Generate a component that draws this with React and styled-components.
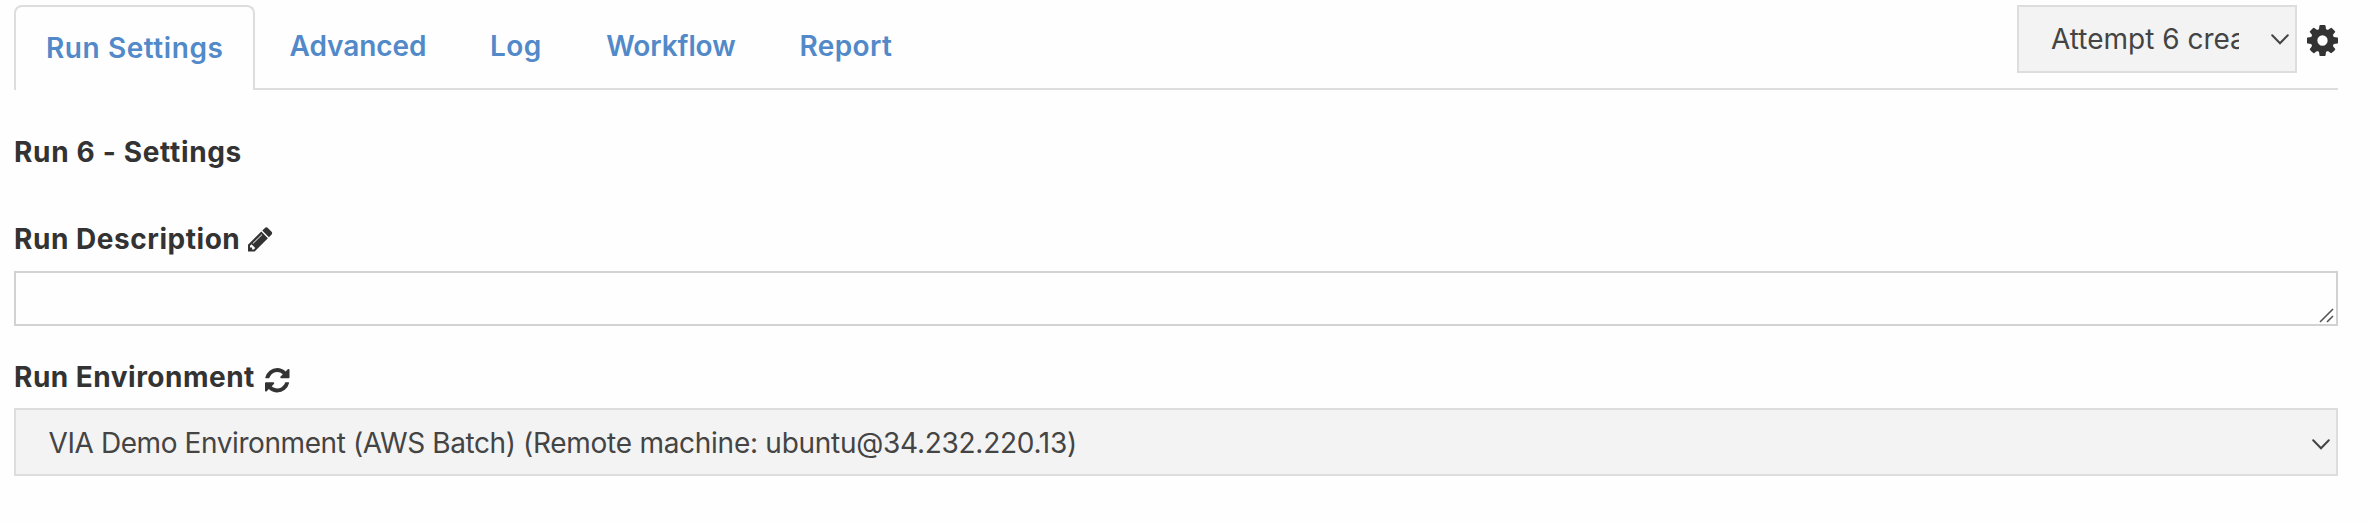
import React from "react";
import styled, { createGlobalStyle } from "styled-components";

const GlobalStyle = createGlobalStyle`
  * { box-sizing: border-box; }
  body {
    margin: 0;
    background: #fefefe;
    color: #333;
    font-family: Inter, "Liberation Sans", sans-serif;
    font-size: 28px;
    line-height: 40px;
  }
`;

const Page = styled.main`
  height: 522px;
  padding: 5px 32px 0 14px;
  overflow: hidden;
`;

const Header = styled.header`
  display: flex;
  justify-content: space-between;
  align-items: flex-start;
  height: 85px;
  box-shadow: inset 0 -2px #ddd;
`;

const Tabs = styled.nav`
  display: flex;
  height: 85px;
`;

const Tab = styled.a`
  width: ${(p) => p.$width}px;
  height: 85px;
  margin-right: 4px;
  padding: ${(p) => (p.$active ? "21px 0 0 30px" : "19px 0 0 28.5px")};
  border: 2px solid ${(p) => (p.$active ? "#ddd" : "transparent")};
  border-bottom: 0;
  border-radius: 8px 8px 0 0;
  background: ${(p) => (p.$active ? "#fefefe" : "transparent")};
  color: #5289c9;
  font-weight: 600;
  letter-spacing: ${(p) => p.$tracking || 0}px;
  white-space: nowrap;
`;

const Actions = styled.div`
  display: flex;
  gap: 10px;
`;

const SelectBox = styled.div`
  display: flex;
  justify-content: space-between;
  align-items: flex-start;
  width: ${(p) => p.$width || "100%"};
  height: 68px;
  margin-top: ${(p) => p.$top || 0}px;
  padding: ${(p) => p.$padding};
  border: 2px solid #ddd;
  background: #f3f3f3;
  color: #444;
`;

const SelectText = styled.span`
  width: ${(p) => p.$width || "auto"};
  overflow: hidden;
  white-space: nowrap;
`;

const Tracked = styled.span`
  letter-spacing: ${(p) => p.$tracking}px;
`;

const Chevron = styled.svg`
  width: 18px;
  height: 11px;
  margin-top: ${(p) => p.$top}px;
  fill: none;
  stroke: #444;
  stroke-width: 2;
  stroke-linecap: round;
`;

const Icon = styled.svg`
  flex: none;
  width: ${(p) => p.$size || 24.5}px;
  height: ${(p) => p.$size || 24.5}px;
  margin-top: ${(p) => p.$top}px;
  fill: #333;
`;

const Title = styled.h1`
  margin: 42px 0 0;
  font-size: 28px;
  line-height: 40px;
  font-weight: 700;
  letter-spacing: 0.66px;
`;

const Label = styled.div`
  display: flex;
  height: 40px;
  margin-top: ${(p) => p.$top}px;
  font-weight: 700;
`;

const LabelText = styled.span`
  width: ${(p) => p.$width}px;
  white-space: nowrap;
  letter-spacing: ${(p) => p.$tracking}px;
`;

const Description = styled.div`
  display: flex;
  justify-content: flex-end;
  align-items: flex-end;
  height: 55px;
  margin-top: 12px;
  padding: 0 2px 1px 0;
  border: 2px solid #d2d2d2;
`;

const Grip = styled.svg`
  width: 15px;
  height: 15px;
  stroke: #555;
  stroke-width: 1.6;
`;

const Down = ({ top }) => (
  <Chevron $top={top} viewBox="0 0 18 11">
    <path d="M1.2 1.3 9 9.3 16.8 1.3" />
  </Chevron>
);

const COG =
  "M1152 896q0-106-75-181t-181-75-181 75-75 181 75 181 181 75 181-75 75-181zm512-109v222q0 12-8 23t-20 13l-185 28q-19 54-39 91 35 50 107 138 10 12 10 25t-9 23q-27 37-99 108t-94 71q-12 0-26-9l-138-108q-44 23-91 38-16 136-29 186-7 28-36 28h-222q-14 0-24.5-8.5t-11.5-21.5l-28-184q-49-16-90-37l-141 107q-10 9-25 9-14 0-25-11-126-114-165-168-7-10-7-23 0-12 8-23 15-21 51-66.5t54-70.5q-27-50-41-99l-183-27q-13-2-21-12.5t-8-23.5v-222q0-12 8-23t19-13l186-28q14-46 39-92-40-57-107-138-10-12-10-24 0-10 9-23 26-36 98.5-107.5t94.5-71.5q13 0 26 10l138 107q44-23 91-38 16-136 29-186 7-28 36-28h222q14 0 24.5 8.5t11.5 21.5l28 184q49 16 90 37l142-107q9-9 24-9 13 0 25 10 129 119 165 170 7 8 7 22 0 12-8 23-15 21-51 66.5t-54 70.5q26 50 41 98l183 28q13 2 21 12.5t8 23.5z";
const PENCIL =
  "M491 1536l91-91-235-235-91 91v107h128v128h107zm523-928q0-22-22-22-10 0-17 7l-542 542q-7 7-7 17 0 22 22 22 10 0 17-7l542-542q7-7 7-17zm-54-192l416 416-832 832h-416v-416zm683 96q0 53-37 90l-166 166-416-416 166-165q36-38 90-38 53 0 91 38l235 234q37 39 37 91z";
const REFRESH =
  "M1639 1056q0 5-1 7-64 268-268 434.5t-478 166.5q-146 0-282.5-55t-243.5-157l-129 129q-19 19-45 19t-45-19-19-45v-448q0-26 19-45t45-19h448q26 0 45 19t19 45-19 45l-137 137q71 66 161 102t187 36q134 0 250-65t186-179q11-17 53-117 8-23 30-23h192q13 0 22.5 9.5t9.5 22.5zm25-800v448q0 26-19 45t-45 19h-448q-26 0-45-19t-19-45 19-45l138-138q-148-137-349-137-134 0-250 65t-186 179q-11 17-53 117-8 23-30 23h-199q-13 0-22.5-9.5t-9.5-22.5v-7q65-268 270-434.5t480-166.5q146 0 284 55.5t245 156.5l130-129q19-19 45-19t45 19 19 45z";

const Glyph = ({ d, size, top }) => (
  <Icon viewBox="128 128 1536 1536" $size={size} $top={top}>
    <path d={d} />
  </Icon>
);

export default function App() {
  return (
    <>
      <GlobalStyle />
      <Page>
        <Header>
          <Tabs>
            <Tab $active $width={241} $tracking={0.57}>Run Settings</Tab>
            <Tab $width={196.5} $tracking={-0.05}>Advanced</Tab>
            <Tab $width={112.3} $tracking={0.45}>Log</Tab>
            <Tab $width={189.2} $tracking={-0.1}>Workflow</Tab>
            <Tab $width={156} $tracking={0.4}>Report</Tab>
          </Tabs>
          <Actions>
            <SelectBox $width="280px" $padding="12px 6px 0 32px">
              <SelectText $width="188px">Attempt 6 created</SelectText>
              <Down top={15} />
            </SelectBox>
            <Glyph d={COG} size={31} top={19.5} />
          </Actions>
        </Header>
        <Title>Run 6 - Settings</Title>
        <Label $top={47}>
          <LabelText $width={234} $tracking={0.54}>Run Description</LabelText>
          <Glyph d={PENCIL} top={8} />
        </Label>
        <Description>
          <Grip viewBox="0 0 15 15">
            <path d="M1 14 14 1M8 14 14 8" />
          </Grip>
        </Description>
        <Label $top={31}>
          <LabelText $width={251} $tracking={0.49}>Run Environment</LabelText>
          <Glyph d={REFRESH} top={11} />
        </Label>
        <SelectBox $top={11} $padding="13px 6px 0 32.5px">
          <SelectText>
            <Tracked $tracking={-0.41}>VIA Demo Environment (AWS Batch) </Tracked>
            <Tracked $tracking={-0.27}>(Remote machine: ubuntu@34.232.220.13)</Tracked>
          </SelectText>
          <Down top={15.5} />
        </SelectBox>
      </Page>
    </>
  );
}
